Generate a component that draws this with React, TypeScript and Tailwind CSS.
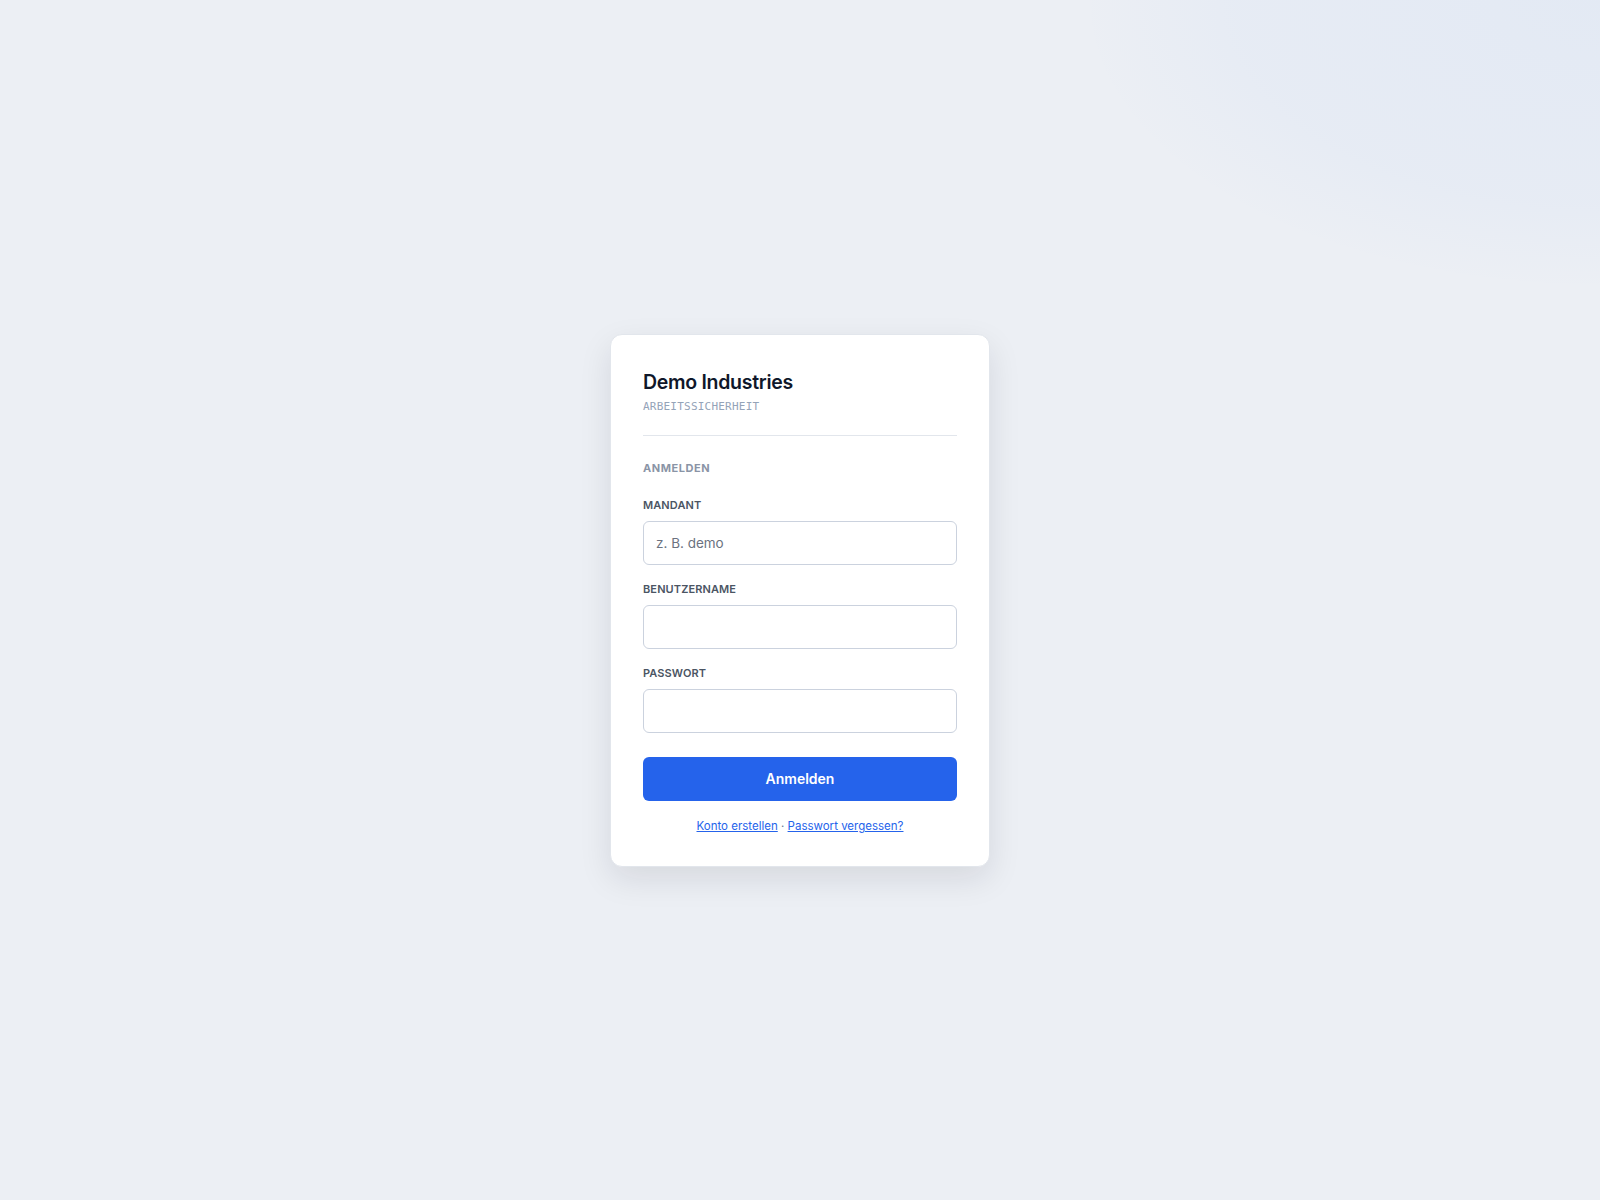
import React from "react";

const labelCls =
  "block mb-2 text-[11px] leading-4 font-semibold uppercase tracking-[0.01em] text-[#4b5563]";
const inputCls =
  "block w-full h-11 rounded-md border border-[#cbd2de] bg-white px-3 text-[13.5px] text-[#0f172a] placeholder:text-[#6b7280] outline-none";

export default function App() {
  return (
    <div
      className="min-h-screen w-full flex items-center justify-center bg-[#eceff4] bg-[radial-gradient(ellipse_520px_290px_at_100%_0%,rgba(59,130,246,0.05),rgba(59,130,246,0.03)_70%,transparent_100%)]"
      style={{ fontFamily: "Inter, 'Noto Sans', sans-serif" }}
    >
      <div className="w-[380px] rounded-xl border border-[#e2e6ec] bg-white px-8 pt-[33px] pb-8 shadow-[0_12px_32px_rgba(15,23,42,0.10)]">
        <div className="border-b border-[#e2e6ec] pb-5">
          <h1 className="text-[19.5px] leading-7 font-semibold tracking-[-0.015em] text-[#0f172a]">
            Demo Industries
          </h1>
          <p
            className="mt-[3px] text-[11px] leading-4 uppercase tracking-[0.02em] text-[#94a3b8]"
            style={{ fontFamily: "'DejaVu Sans Mono', 'Liberation Mono', monospace" }}
          >
            Arbeitssicherheit
          </p>
        </div>

        <form className="mt-6" onSubmit={(e) => e.preventDefault()}>
          <h2 className="text-[11px] leading-4 font-bold uppercase tracking-[0.05em] text-[#8a94a6]">
            Anmelden
          </h2>

          <div className="mt-[21px]">
            <label className={labelCls}>Mandant</label>
            <input className={inputCls} placeholder="z. B. demo" />
          </div>
          <div className="mt-4">
            <label className={labelCls}>Benutzername</label>
            <input className={inputCls} />
          </div>
          <div className="mt-4">
            <label className={labelCls}>Passwort</label>
            <input className={inputCls} type="password" />
          </div>

          <button
            type="submit"
            className="mt-6 flex h-11 w-full items-center justify-center rounded-md bg-[#2563eb] text-[14px] font-semibold text-white"
          >
            Anmelden
          </button>

          <p className="mt-[17px] text-center text-[11.5px] leading-4 text-[#64748b]">
            <a href="#" className="text-[#2563eb] underline">
              Konto erstellen
            </a>
            {" · "}
            <a href="#" className="text-[#2563eb] underline">
              Passwort vergessen?
            </a>
          </p>
        </form>
      </div>
    </div>
  );
}
